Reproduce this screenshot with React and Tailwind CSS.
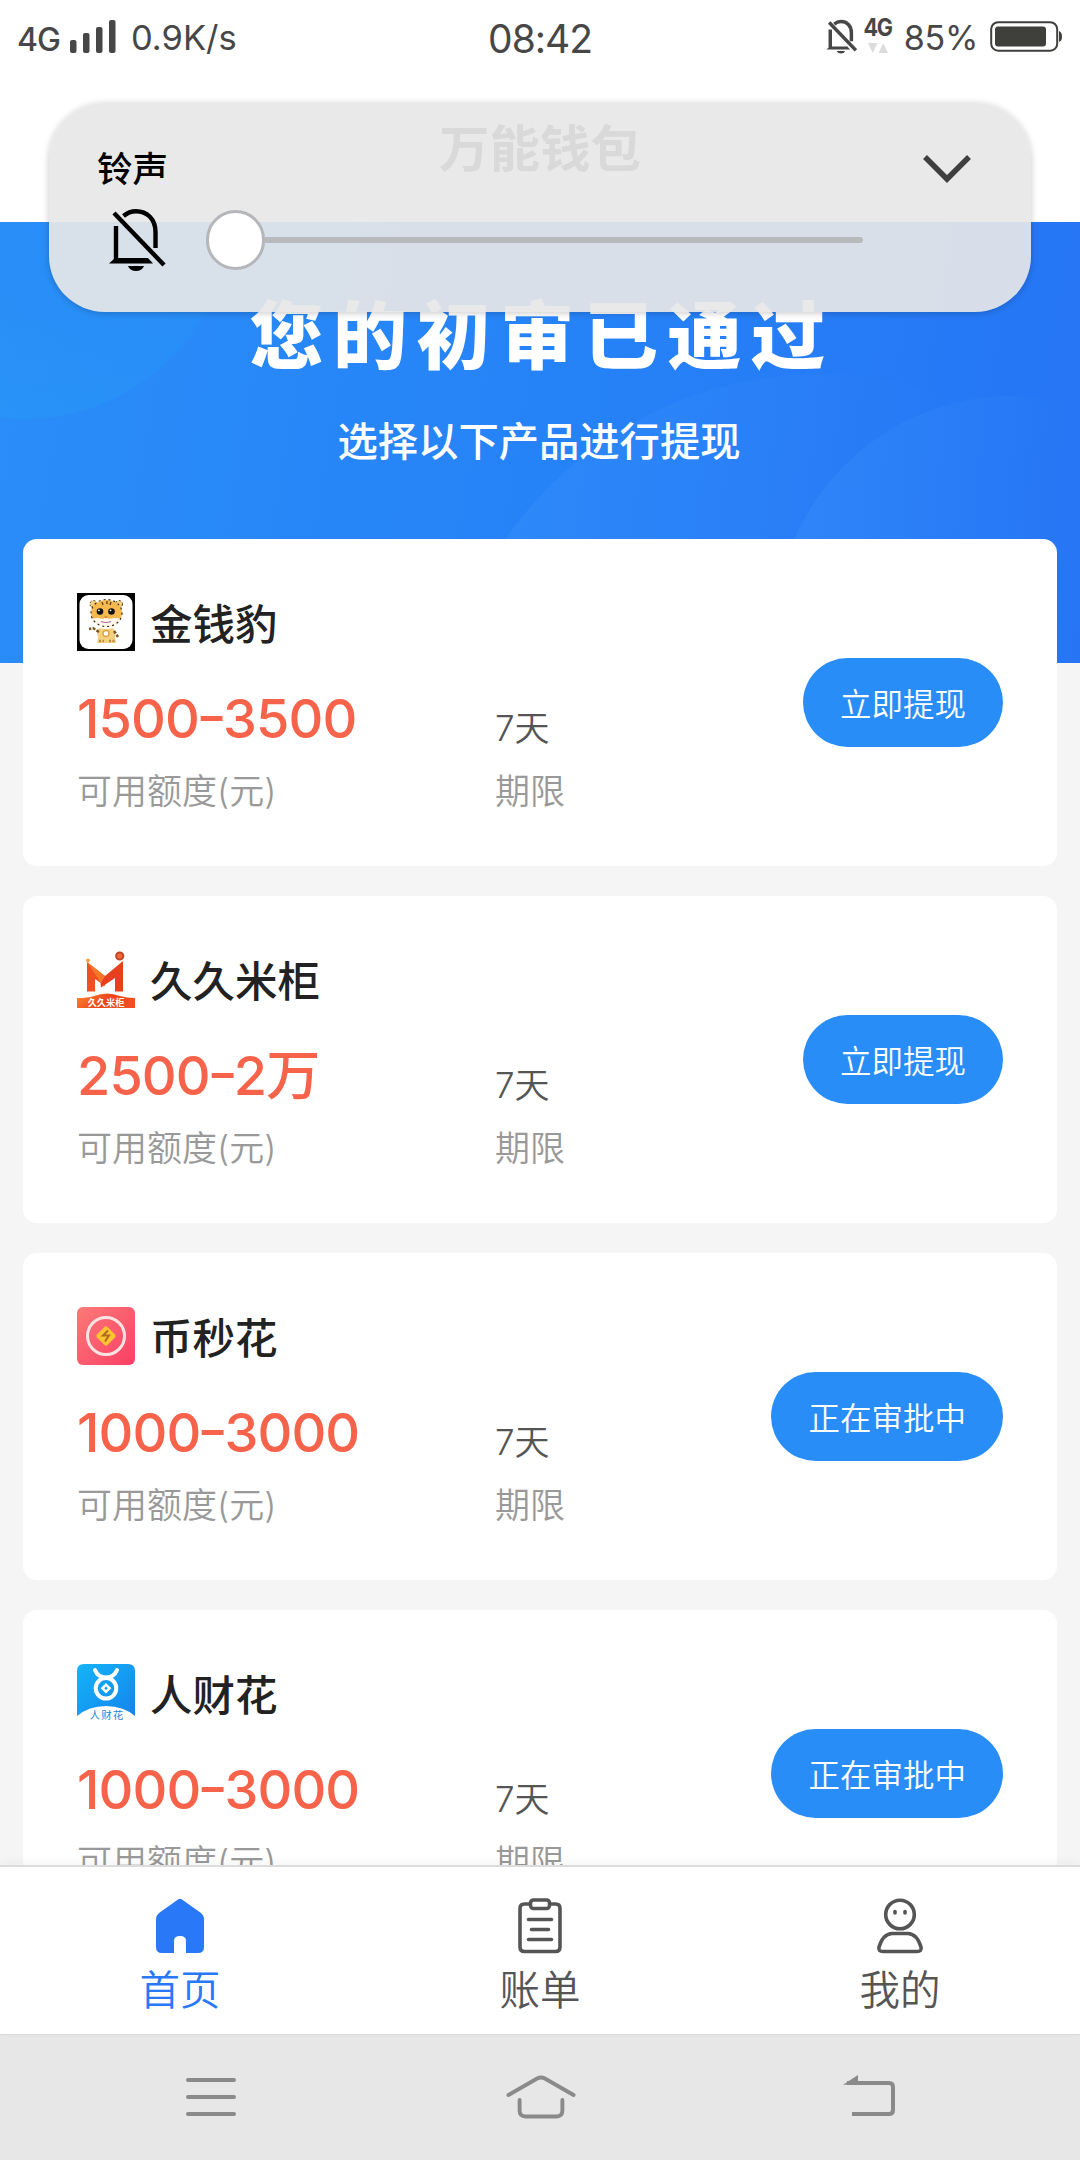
const produkte = [
  { id: 1, name: "金钱豹", min: "1500", max: "3500", days: "7天", action: "立即提现", Logo: LeopardLogo },
  { id: 2, name: "久久米柜", min: "2500", max: "2万", days: "7天", action: "立即提现", Logo: RiceLogo },
  { id: 3, name: "币秒花", min: "1000", max: "3000", days: "7天", action: "正在审批中", Logo: CoinLogo },
  { id: 4, name: "人财花", min: "1000", max: "3000", days: "7天", action: "正在审批中", Logo: FlowerLogo },
];

function LeopardLogo() {
  return (
    <svg viewBox="0 0 58 58" className="w-[58px] h-[58px]">
      <rect width="58" height="58" fill="#000" />
      <rect x="2.5" y="2" width="53" height="54" rx="9" fill="#fff" />
      <circle cx="16.5" cy="11" r="3.5" fill="#f5cf80" stroke="#54401c" strokeDasharray="2 2" />
      <circle cx="42" cy="11" r="3.5" fill="#f5cf80" stroke="#54401c" strokeDasharray="2 2" />
      <ellipse cx="29.5" cy="20" rx="15.5" ry="13" fill="#f6b94f" />
      <path d="M25 9l1 3M30 8v3M34 9l-1 3" stroke="#54401c" strokeWidth="1.3" />
      <path d="M15 26q5-2 11 0q3-3 6 0q7-2 12 0q-4 8-14.500 8t-14.500-8z" fill="#fff6ec" />
      <ellipse cx="29.5" cy="20" rx="15.5" ry="13.5" fill="none" stroke="#3d2c12" strokeWidth="1.2" strokeDasharray="2 3" />
      <circle cx="23" cy="18.5" r="3.3" fill="#111" />
      <circle cx="34.5" cy="18.5" r="3.3" fill="#111" />
      <circle cx="22" cy="17.3" r="0.9" fill="#fff" />
      <circle cx="33.5" cy="17.3" r="0.9" fill="#fff" />
      <path d="M27 23.5h4l-2 2z" fill="#c97b3b" />
      <path d="M24 28.5q5 2 10 0" fill="none" stroke="#b06a9a" strokeWidth="1.2" />
      <path d="M22 35q7 2 14 0q3 3 2 9l1 6h-19l1-6q-2-5 1-9z" fill="#f3cf80" />
      <path d="M22 39l-6-4l-4 1M37 38l4 6" stroke="#7a5620" strokeWidth="2.5" strokeDasharray="3 1.5" fill="none" />
      <path d="M22 48h5M32 48h6" stroke="#b98a3c" strokeWidth="2.5" strokeDasharray="2 1.5" fill="none" />
      <circle cx="29" cy="40.500" r="3" fill="#fff" stroke="#dda640" strokeWidth="1.5" />
    </svg>
  );
}

function RiceLogo() {
  return (
    <svg viewBox="0 0 58 58" className="w-[58px] h-[58px]">
      <defs>
        <linearGradient id="rice" x1="0" y1="0" x2="1" y2="0.3">
          <stop offset="0" stopColor="#f98a2c" />
          <stop offset=".6" stopColor="#ee431c" />
          <stop offset="1" stopColor="#f0501f" />
        </linearGradient>
      </defs>
      <path d="M10 12L28 26V36L18 29V41.5H10z" fill="#f0501f" />
      <path d="M46 11V41.5H38V28L24 37.5Q22 31 28 26z" fill="#e8401f" />
      <path d="M10 12L28 26L24 33z" fill="#f4772a" />
      <circle cx="11" cy="10.5" r="2" fill="#f3a843" />
      <circle cx="42.7" cy="6" r="3.6" fill="#ec6a3c" stroke="#c24526" strokeWidth="2" />
      <path d="M0 58V48Q10 48 17 46Q30 41 43 46Q50 48 58 48V58z" fill="url(#rice)" />
      <text x="29" y="55.5" textAnchor="middle" fontSize="9.2" fontWeight="700" fill="#fff">久久米柜</text>
    </svg>
  );
}

function CoinLogo() {
  return (
    <svg viewBox="0 0 58 58" className="w-[58px] h-[58px]">
      <defs>
        <linearGradient id="coin" x1="0" y1="0" x2="1" y2="1">
          <stop offset="0" stopColor="#fb7a77" />
          <stop offset="1" stopColor="#fb3f66" />
        </linearGradient>
      </defs>
      <rect width="58" height="58" rx="6" fill="url(#coin)" />
      <circle cx="29" cy="29" r="18.5" fill="none" stroke="#fbe3e4" strokeWidth="3" />
      <rect x="21.5" y="21.5" width="15" height="15" rx="2.5" transform="rotate(45 29 29)" fill="#fdc431" />
      <path d="M31 23.5l-5 5h6l-4 6" fill="none" stroke="#b06a1e" strokeWidth="2" />
    </svg>
  );
}

function FlowerLogo() {
  return (
    <svg viewBox="0 0 58 58" className="w-[58px] h-[58px]">
      <defs>
        <linearGradient id="flower" x1="0" y1="0" x2="1" y2="1">
          <stop offset="0" stopColor="#16b4f6" />
          <stop offset="1" stopColor="#1384ef" />
        </linearGradient>
      </defs>
      <path d="M0 52V7Q0 0 7 0H51Q58 0 58 7V52Q46 42 29 42T0 52z" fill="url(#flower)" />
      <circle cx="29" cy="24.3" r="10.3" fill="none" stroke="#fff" strokeWidth="4" />
      <path d="M18 6Q21 13.5 29 13.5Q37 13.5 40 6" fill="none" stroke="#fff" strokeWidth="4" strokeLinecap="round" />
      <rect x="26.5" y="21.8" width="5" height="5" transform="rotate(45 29 24.3)" fill="none" stroke="#fff" strokeWidth="2.5" />
      <text x="30" y="55" textAnchor="middle" fontSize="10.5" letterSpacing="1.2" fill="#2086d8">人财花</text>
    </svg>
  );
}

function MutedBell({ className, strokeWidth = 4.4 }) {
  return (
    <svg viewBox="0 0 58 64" className={className} fill="none" stroke="currentColor" strokeWidth={strokeWidth}>
      <path d="M6 5L56 57" />
      <path d="M8 18V52" />
      <path d="M15.5 8Q21 3.2 28 3.2C39 3.2 47.5 11 47.5 24V40" />
      <path d="M1 55.5L7 50H40L45 55.5z" fill="currentColor" stroke="none" />
      <path d="M20 58H36Q34 63 28 63T20 58z" fill="currentColor" stroke="none" />
    </svg>
  );
}

function StatusBar() {
  return (
    <div className="flex items-center h-[76px] pl-[17px] pr-[17px] text-[#474747]">
      <div className="flex flex-1 items-center">
        <span className="text-[32px] font-medium tracking-[-1px] leading-none mt-1">4G</span>
        <svg viewBox="0 0 46 34" className="w-[46px] h-[34px] ml-[10px] -mt-[2px]" fill="currentColor">
          <rect x="0" y="20" width="6.5" height="13" rx="2" />
          <rect x="13" y="13" width="6.5" height="20" rx="2" />
          <rect x="26" y="7" width="6.5" height="26" rx="2" />
          <rect x="39" y="0" width="6.5" height="33" rx="2" />
        </svg>
        <span className="ml-[15px] text-[34.5px] leading-none">0.9K/s</span>
      </div>
      <span className="text-[39px] leading-none tracking-[-1px]">08:42</span>
      <div className="flex flex-1 items-center justify-end">
        <MutedBell className="w-[31px] h-[36px] -mt-[3px]" strokeWidth={6.5} />
        <div className="flex flex-col items-center ml-[7px] w-[28px] -mt-[6px]">
          <span className="text-[24px] font-bold leading-[22px] tracking-[-1.5px] scale-x-90">4G</span>
          <svg viewBox="0 0 20 10" className="w-5 h-[10px] mt-[4px]" fill="#dcdcdc">
            <path d="M0 0h9.500l-4.750 10zM10.500 10h9.500l-4.750-10z" />
          </svg>
        </div>
        <span className="ml-[12px] text-[34px] leading-none tracking-[-0.3px]">85%</span>
        <svg viewBox="0 0 73 32" className="w-[73px] h-[32px] ml-[12px] -mt-[2px]">
          <rect x="1.2" y="1.2" width="66" height="28.5" rx="7" fill="none" stroke="#3f403c" strokeWidth="2" />
          <rect x="5" y="5.5" width="51" height="20" rx="3" fill="#3f403c" />
          <path d="M69 10q3 1 3 5.5t-3 5.5z" fill="#3f403c" />
        </svg>
      </div>
    </div>
  );
}

function Hero() {
  return (
    <section className="relative h-[441px] shrink-0 overflow-hidden bg-linear-100 from-[#2a8df8] via-[#2683f7] to-[#2674f5] text-white text-center">
      <svg viewBox="0 0 1080 441" className="absolute inset-0 w-full h-full">
        <defs>
          <linearGradient id="arc" x1="0" y1="0" x2="1" y2="0">
            <stop offset="0" stopColor="#4a9dff" stopOpacity=".22" />
            <stop offset=".7" stopColor="#4a9dff" stopOpacity="0" />
          </linearGradient>
          <linearGradient id="spot" x1="0" y1="0" x2="0" y2="1">
            <stop offset=".5" stopColor="#269af8" stopOpacity="0" />
            <stop offset="1" stopColor="#269af8" stopOpacity=".45" />
          </linearGradient>
        </defs>
        <circle cx="25" cy="-8" r="205" fill="url(#spot)" />
        <circle cx="820" cy="534" r="382" fill="url(#arc)" />
        <circle cx="1012" cy="411" r="237" fill="url(#arc)" />
      </svg>
      <h1 className="relative pt-[61px] pl-[4px] text-[74px] leading-[106px] font-black tracking-[9.6px]">您的初审已通过</h1>
      <p className="relative pt-[23px] pr-[2px] text-[40.3px] leading-[60px] font-medium">选择以下产品进行提现</p>
    </section>
  );
}

function ProductCard({ product }) {
  const { name, min, max, days, action, Logo } = product;
  return (
    <div className="flex items-start h-[327px] shrink-0 pl-[54px] pr-[54px] bg-white rounded-[14px]">
      <div className="w-[418px] pt-[54px]">
        <div className="flex items-center gap-[15px] h-[58px]">
          <Logo />
          <h3 className="text-[42.5px] leading-[58px] font-medium text-[#222] mt-[6px]">{name}</h3>
        </div>
        <p className="mt-[37px] h-[62px] text-[54px] leading-[62px] font-medium tracking-[-0.9px] text-[#f7634a]">
          {min}
          <span className="relative -top-[3px] inline-block scale-x-125">-</span>
          {max}
        </p>
        <p className="mt-[17px] text-[35px] leading-[48px] font-[350] text-[#999]">可用额度(元)</p>
      </div>
      <div className="flex-1 pt-[165px]">
        <p className="text-[35px] leading-[48px] font-[350] text-[#555]">{days}</p>
        <p className="mt-[15px] text-[35px] leading-[48px] font-[350] text-[#999]">期限</p>
      </div>
      <button className="mt-[119px] h-[89px] px-[37px] pt-[4px] rounded-full bg-[#298df8] text-white text-[31.5px] leading-none font-[350]">{action}</button>
    </div>
  );
}

function HomeIcon() {
  return (
    <svg viewBox="0 0 48 56" className="w-[48px] h-[56px]" fill="currentColor">
      <path d="M22 1.5Q24 0 26 1.5L45 15Q48 17.5 48 21V49Q48 55 42 55H30V43Q30 38 24 38T18 43V55H6Q0 55 0 49V21Q0 17.5 3 15z" />
    </svg>
  );
}

function BillIcon() {
  return (
    <svg viewBox="0 0 48 56" className="w-[48px] h-[56px]" fill="none" stroke="currentColor" strokeWidth="3.6" strokeLinecap="round">
      <path d="M13 6H8.5Q4 6 4 10.5V49Q4 53.5 8.5 53.5H39.5Q44 53.5 44 49V10.5Q44 6 39.5 6H35" />
      <rect x="14.5" y="2" width="19" height="8.5" rx="3" />
      <path d="M12.5 21.5H35.5M15.5 31.5H32.5M12.5 41.5H35.5" />
    </svg>
  );
}

function UserIcon() {
  return (
    <svg viewBox="0 0 48 56" className="w-[48px] h-[56px]" fill="none" stroke="currentColor" strokeWidth="3.6" strokeLinecap="round">
      <circle cx="24" cy="16.5" r="14.3" />
      <path d="M19 13.5V15M29 13.5V15" />
      <path d="M16 35.5H32Q41 36 45 49Q46 53.5 41 53.5H7Q2 53.5 3 49Q7 36 16 35.5z" />
    </svg>
  );
}

const tabs = [
  { label: "首页", Icon: HomeIcon, active: true },
  { label: "账单", Icon: BillIcon },
  { label: "我的", Icon: UserIcon },
];

function TabBar() {
  return (
    <nav className="relative flex h-[169px] shrink-0 bg-white border-t-2 border-[#dcdcdc] shadow-[0_-2px_10px_rgba(0,0,0,0.05)]">
      {tabs.map(({ label, Icon, active }) => (
        <div key={label} className={`flex flex-1 flex-col items-center pt-[31px] ${active ? "text-[#2878f7]" : "text-[#555]"}`}>
          <Icon />
          <span className="mt-[7px] text-[40.5px] leading-[60px] font-[350]">{label}</span>
        </div>
      ))}
    </nav>
  );
}

function SystemNav() {
  return (
    <div className="flex items-center justify-between h-[126px] shrink-0 pl-[186px] pr-[185px] pb-[1px] bg-[#e7e7e7] border-t border-[#dedede] text-[#8a8a8a]">
      <svg viewBox="0 0 50 44" className="w-[50px] h-[44px]" stroke="currentColor" strokeWidth="4" strokeLinecap="round">
        <path d="M2 5H48M2 22H48M2 39H48" />
      </svg>
      <svg viewBox="0 0 72 44" className="w-[70px] h-[44px] ml-[3px]" fill="none" stroke="currentColor" strokeWidth="4" strokeLinecap="round">
        <path d="M2.5 20L32 3Q36 1 40 3L69.5 20" />
        <path d="M14 25V36Q14 42 20 42H52Q58 42 58 36V25" />
      </svg>
      <svg viewBox="0 0 52 44" className="w-[52px] h-[44px]" fill="none" stroke="currentColor" strokeWidth="4">
        <path d="M4 8H46Q50 8 50 12V35Q50 39 46 39H9" />
        <path d="M0 9.8L15 0V9.8z" fill="currentColor" stroke="none" />
      </svg>
    </div>
  );
}

function VolumePanel() {
  return (
    <div className="absolute left-[49px] top-[103px] w-[982px] h-[209px] rounded-[56px] bg-[#e7e7e7]/92 shadow-[0_1px_7px_rgba(0,0,0,0.22)] pl-[48px] pr-[60px] pt-[41px]">
      <div className="flex items-center justify-between h-[52px]">
        <span className="text-[35.500px] leading-[52px] font-medium text-black">铃声</span>
        <svg viewBox="0 0 48 28" className="w-[48px] h-[28px] -mt-[2px]" fill="none" stroke="#3f3f3f" strokeWidth="5.5">
          <path d="M2 2L24 24L46 2" />
        </svg>
      </div>
      <div className="flex items-center mt-[12px] pl-[11px] h-[64px]">
        <MutedBell className="w-[58px] h-[64px] text-black" />
        <div className="flex items-center ml-[40px] w-[657px]">
          <div className="w-[59px] h-[60px] rounded-full bg-white border-3 border-[#b4b6b9]" />
          <div className="flex-1 h-[6px] rounded-r-full bg-[#b7b9bb]" />
        </div>
      </div>
    </div>
  );
}

export default function App() {
  return (
    <div className="relative flex flex-col w-[1080px] h-[2160px] overflow-hidden bg-[#f5f5f5] font-['Inter','Noto_Sans_CJK_SC',sans-serif]">
      <header className="h-[222px] shrink-0 bg-white">
        <StatusBar />
        <h2 className="pt-[37px] text-center text-[50.5px] leading-[72px] font-bold text-[#333]">万能钱包</h2>
      </header>
      <main className="flex flex-1 min-h-0 flex-col overflow-hidden">
        <Hero />
        <div className="relative flex flex-col gap-[30px] -mt-[124px] px-[23px]">
          {produkte.map((product) => (
            <ProductCard key={product.id} product={product} />
          ))}
        </div>
      </main>
      <TabBar />
      <SystemNav />
      <VolumePanel />
    </div>
  );
}
